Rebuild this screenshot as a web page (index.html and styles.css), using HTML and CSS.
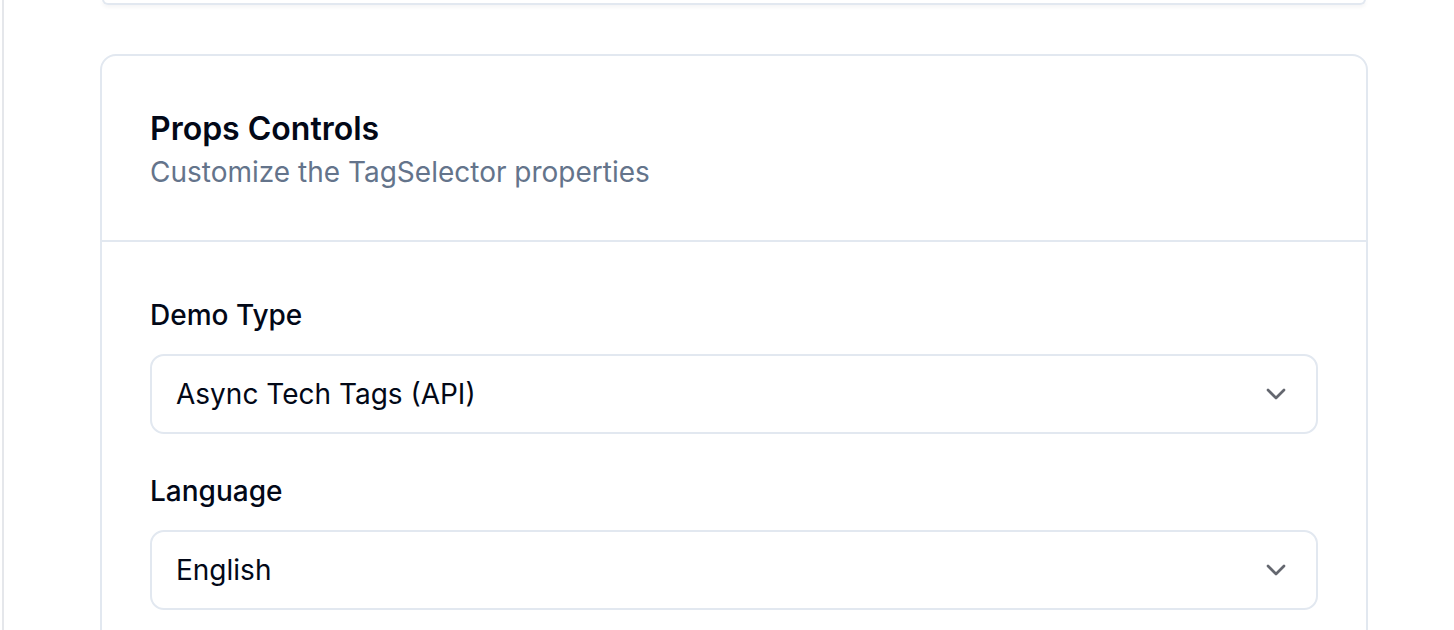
FILE: index.html
```html
<!DOCTYPE html>
<html lang="en">
<head>
<meta charset="utf-8">
<title>Props Controls</title>
<link rel="stylesheet" href="styles.css">
</head>
<body>
<div class="page">
  <div class="main">
    <div class="top-card"></div>
    <section class="card">
      <header class="card-header">
        <h2 class="card-title">Props Controls</h2>
        <p class="card-desc">Customize the TagSelector properties</p>
      </header>
      <div class="card-body">
        <div class="field">
          <label class="field-label">Demo Type</label>
          <div class="select">
            <span class="select-value">Async Tech Tags (API)</span>
            <svg class="chevron" viewBox="0 0 24 24" fill="none" stroke="currentColor" stroke-width="2" stroke-linecap="round" stroke-linejoin="round"><path d="m6 9 6 6 6-6"/></svg>
          </div>
        </div>
        <div class="field">
          <label class="field-label">Language</label>
          <div class="select">
            <span class="select-value">English</span>
            <svg class="chevron" viewBox="0 0 24 24" fill="none" stroke="currentColor" stroke-width="2" stroke-linecap="round" stroke-linejoin="round"><path d="m6 9 6 6 6-6"/></svg>
          </div>
        </div>
      </div>
    </section>
  </div>
</div>
</body>
</html>
```

FILE: styles.css
```css
* { box-sizing: border-box; }
html, body { margin: 0; padding: 0; background: #ffffff; }
body {
  font-family: Inter, "Noto Sans", "Liberation Sans", sans-serif;
  color: #020817;
  height: 630px;
  overflow: hidden;
}
.page {
  display: flex;
  height: 100%;
}
.main {
  margin-left: 2px;
  border-left: 2px solid #e5e7eb;
  flex: 1;
  padding-left: 96px;
}
.top-card {
  width: 1264px;
  height: 6px;
  margin-top: -1px;
  margin-left: 2px;
  border: 2px solid #e2e8f0;
  border-top: none;
  border-radius: 0 0 14px 14px;
  box-shadow: 0 2px 4px rgba(15, 23, 42, 0.05);
}
.card {
  margin-top: 49px;
  width: 1268px;
  border: 2px solid #e2e8f0;
  border-radius: 16px;
  background: #fff;
}
.card-header {
  padding: 48px 48px 50px;
  border-bottom: 2px solid #e2e8f0;
}
.card-title {
  margin: 0;
  font-size: 32px;
  line-height: 50px;
  font-weight: 600;
}
.card-desc {
  margin: 0;
  font-size: 28px;
  line-height: 36px;
  color: #64748b;
}
.card-body {
  padding: 56px 48px 48px;
  display: flex;
  flex-direction: column;
  gap: 40px;
}
.field {
  display: flex;
  flex-direction: column;
  gap: 22px;
}
.field-label {
  font-size: 28px;
  line-height: 34px;
  font-weight: 500;
}
.select {
  height: 80px;
  border: 2px solid #e2e8f0;
  border-radius: 14px;
  padding: 0 24px;
  display: flex;
  align-items: center;
  justify-content: space-between;
}
.select-value {
  font-size: 28px;
  line-height: 40px;
}
.chevron {
  width: 32px;
  height: 32px;
  color: #64676f;
}
```
